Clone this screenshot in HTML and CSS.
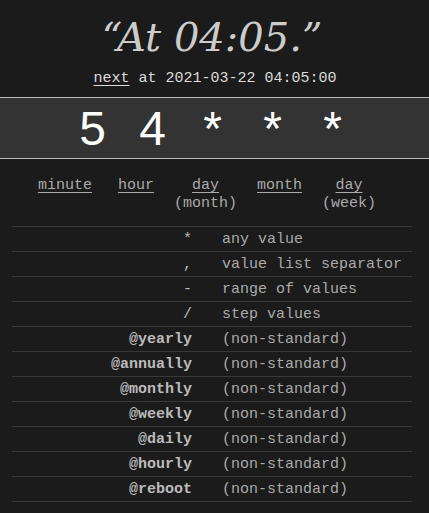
FILE: index.html
```html
<!DOCTYPE html>
<html>
<head>
<meta charset="utf-8">
<link rel="stylesheet" href="styles.css">
</head>
<body>
<div class="page">
  <h1 class="title">“At 04:05.”</h1>
  <div class="next"><span class="link">next</span> at 2021-03-22 04:05:00</div>
  <div class="expr">
    <span class="tok">5</span><span class="tok">4</span><span class="tok">*</span><span class="tok">*</span><span class="tok">*</span>
  </div>
  <div class="parts">
    <div class="part first"><span class="link">minute</span></div>
    <div class="part"><span class="link">hour</span></div>
    <div class="part"><span class="link">day</span><br>(month)</div>
    <div class="part"><span class="link">month</span></div>
    <div class="part"><span class="link">day</span><br>(week)</div>
  </div>
  <table class="ref">
    <tr><td class="sym">*</td><td class="desc">any value</td></tr>
    <tr><td class="sym">,</td><td class="desc">value list separator</td></tr>
    <tr><td class="sym">-</td><td class="desc">range of values</td></tr>
    <tr><td class="sym">/</td><td class="desc">step values</td></tr>
    <tr><td class="sym b">@yearly</td><td class="desc">(non-standard)</td></tr>
    <tr><td class="sym b">@annually</td><td class="desc">(non-standard)</td></tr>
    <tr><td class="sym b">@monthly</td><td class="desc">(non-standard)</td></tr>
    <tr><td class="sym b">@weekly</td><td class="desc">(non-standard)</td></tr>
    <tr><td class="sym b">@daily</td><td class="desc">(non-standard)</td></tr>
    <tr><td class="sym b">@hourly</td><td class="desc">(non-standard)</td></tr>
    <tr><td class="sym b">@reboot</td><td class="desc">(non-standard)</td></tr>
  </table>
</div>
</body>
</html>
```

FILE: styles.css
```css
html, body {
  margin: 0;
  padding: 0;
  background: #1b1b1b;
}
.page {
  font-family: "Liberation Mono", monospace;
  font-size: 15px;
  color: #bbb;
  display: flex;
  flex-direction: column;
  align-items: center;
  padding-right: 5px;
}
.title {
  margin: 12px 0 0;
  font-family: "DejaVu Serif", serif;
  font-style: italic;
  font-weight: normal;
  font-size: 40px;
  line-height: 50px;
  color: #ccc;
}
.next {
  margin-top: 8px;
  padding-left: 6px;
  line-height: 18px;
  color: #ddd;
}
.link {
  text-decoration: underline;
  text-underline-offset: 3px;
}
.expr {
  align-self: stretch;
  margin-top: 9px;
  margin-right: -5px;
  height: 60px;
  background: #333;
  border-top: 1px solid #bbb;
  border-bottom: 1px solid #bbb;
  display: flex;
  justify-content: center;
  align-items: center;
  font-family: "Liberation Sans", Arial, sans-serif;
  font-size: 48px;
  color: #fff;
  padding-right: 4px;
}
.tok {
  width: 60px;
  text-align: center;
}
.parts {
  margin-top: 18px;
  display: flex;
  gap: 20px;
  line-height: 18px;
  color: #aaa;
  padding-right: 10px;
}
.part {
  text-align: center;
}
.part.first {
  margin-right: 6px;
}
.ref {
  margin-top: 13px;
  width: 400px;
  table-layout: fixed;
  border-collapse: collapse;
  border-bottom: 1px solid #383838;
}
.ref tr {
  border-top: 1px solid #383838;
}
.ref td {
  height: 23px;
  padding-top: 1px;
  padding-bottom: 0;
  line-height: 18px;
  vertical-align: middle;
  white-space: nowrap;
}
.sym {
  width: 180px;
  padding-right: 15px;
  padding-left: 0;
  text-align: right;
  color: #bbb;
}
.sym.b {
  font-weight: bold;
}
.desc {
  padding-left: 15px;
  padding-right: 0;
  color: #aaa;
}
```
